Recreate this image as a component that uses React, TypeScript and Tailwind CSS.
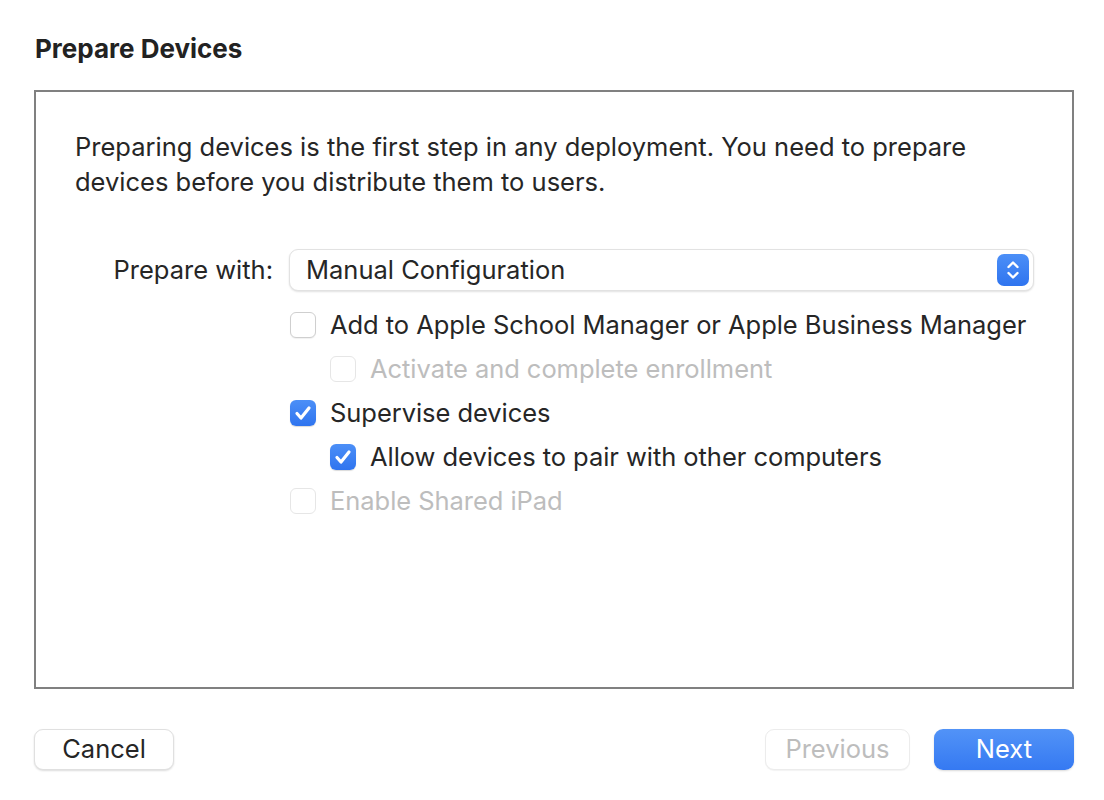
import { ReactNode } from "react";

function CheckIcon() {
  return (
    <svg viewBox="0 0 26 26" className="h-[26px] w-[26px]">
      <path d="M7 13.5l4 4.5 8-10" fill="none" stroke="white" strokeWidth="3.2" strokeLinecap="round" strokeLinejoin="round" />
    </svg>
  );
}

function Checkbox({ checked, disabled }: { checked?: boolean; disabled?: boolean }) {
  if (checked) {
    return (
      <span className="flex h-[26px] w-[26px] shrink-0 items-center justify-center rounded-[6px] bg-gradient-to-b from-[#4c8ff7] to-[#2f74ef] shadow-[0_1px_1px_rgba(0,0,0,0.15)]">
        <CheckIcon />
      </span>
    );
  }
  return (
    <span
      className={
        disabled
          ? "h-[26px] w-[26px] shrink-0 rounded-[6px] border border-[#e6e6e6] bg-white"
          : "h-[26px] w-[26px] shrink-0 rounded-[6px] border border-[#cfcfcf] bg-white shadow-[0_1px_1px_rgba(0,0,0,0.06)]"
      }
    />
  );
}

function Row({ children, checked, disabled, indent }: { children: ReactNode; checked?: boolean; disabled?: boolean; indent?: boolean }) {
  return (
    <div className={indent ? "flex h-[44px] items-center gap-[14px] pl-[40px]" : "flex h-[44px] items-center gap-[14px]"}>
      <Checkbox checked={checked} disabled={disabled} />
      <span className={disabled ? "text-[#bdbdbd]" : "text-[#262626]"}>{children}</span>
    </div>
  );
}

function Stepper() {
  return (
    <span className="flex h-[32px] w-[32px] items-center justify-center rounded-[7px] bg-gradient-to-b from-[#4c8ff7] to-[#2f74ef]">
      <svg viewBox="0 0 32 32" className="h-[32px] w-[32px]">
        <path d="M11.5 13l4.5-4.5 4.5 4.5M11.5 19l4.5 4.5 4.5-4.5" fill="none" stroke="white" strokeWidth="2.4" strokeLinecap="round" strokeLinejoin="round" />
      </svg>
    </span>
  );
}

export default function App() {
  return (
    <div className="flex h-[800px] w-[1104px] flex-col bg-white pl-[34px] pr-[30px] font-['Inter',sans-serif] text-[25.5px] text-[#262626]">
      <h1 className="mt-[34px] h-[30px] pl-[1px] text-[26px] font-bold leading-[30px] text-[#222]">Prepare Devices</h1>

      <div className="mt-[26px] flex h-[599px] flex-col border-2 border-[#808080] pl-[39px] pr-[30px] pt-[37px]">
        <p className="leading-[35px] whitespace-nowrap">
          Preparing devices is the first step in any deployment. You need to prepare
          <br />
          devices before you distribute them to users.
        </p>

        <div className="mt-[50px] flex items-start">
          <div className="flex h-[42px] w-[214px] shrink-0 items-center justify-end pr-[16px]">Prepare with:</div>
          <div className="flex flex-col">
            <div className="flex h-[42px] w-[745px] items-center justify-between rounded-[9px] border border-[#e2e2e2] bg-white pl-[16px] pr-[4px] shadow-[0_1px_2px_rgba(0,0,0,0.12)]">
              <span>Manual Configuration</span>
              <Stepper />
            </div>
            <div className="mt-[12px] flex flex-col pl-[1px] whitespace-nowrap tracking-[-0.05px]">
              <Row>Add to Apple School Manager or Apple Business Manager</Row>
              <Row indent disabled>Activate and complete enrollment</Row>
              <Row checked>Supervise devices</Row>
              <Row indent checked>Allow devices to pair with other computers</Row>
              <Row disabled>Enable Shared iPad</Row>
            </div>
          </div>
        </div>
      </div>

      <div className="mt-[40px] flex items-center">
        <button className="h-[41px] w-[140px] rounded-[9px] border border-[#e0e0e0] bg-white text-[#262626] shadow-[0_1px_2px_rgba(0,0,0,0.14)]">Cancel</button>
        <div className="flex-1" />
        <button className="h-[41px] w-[145px] rounded-[9px] border border-[#ececec] bg-white text-[#bdbdbd] shadow-[0_1px_1px_rgba(0,0,0,0.05)]">Previous</button>
        <button className="ml-[24px] h-[41px] w-[140px] rounded-[9px] bg-gradient-to-b from-[#5293f7] to-[#3579f2] text-white shadow-[0_1px_2px_rgba(0,0,0,0.15)]">Next</button>
      </div>
    </div>
  );
}
